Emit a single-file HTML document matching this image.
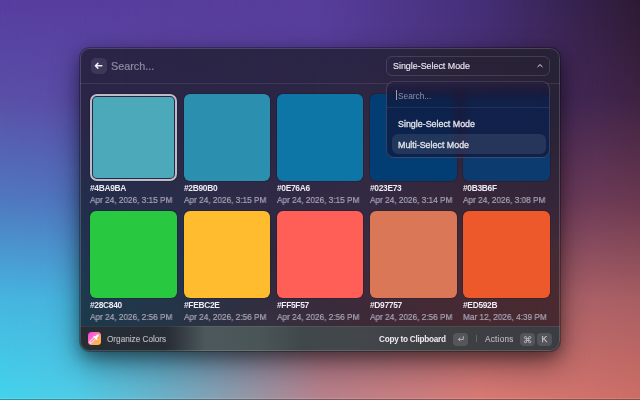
<!DOCTYPE html>
<html><head><meta charset="utf-8">
<style>
*{box-sizing:border-box;margin:0;padding:0}
html,body{width:640px;height:400px;overflow:hidden;background:#563D9F}
body{position:relative;font-family:"Liberation Sans",sans-serif;}
.bgl{position:absolute;left:0;top:0;width:640px;height:400px}
.wl{position:absolute;left:0;top:0;width:480px;height:303px}
.win{position:absolute;left:80px;top:48px;width:480px;height:303px;border-radius:10px;overflow:hidden;
 box-shadow:0 12px 30px rgba(0,0,0,0.45), 0 5px 14px rgba(0,0,0,0.3), 0 0 0 1px rgba(0,0,0,0.28);}
.win div{will-change:transform}
.wborder{position:absolute;inset:0;border-radius:10px;border:1px solid rgba(255,255,255,0.16);pointer-events:none}
.sep{position:absolute;left:0;width:100%;height:1px;background:rgba(255,255,255,0.09)}
.back{position:absolute;left:11.2px;top:10.2px;width:15.5px;height:15.5px;border-radius:5px;background:rgba(255,255,255,0.09)}
.search{position:absolute;left:30.8px;top:12.8px;font-size:10.8px;line-height:11px;color:#8E8AA0;white-space:nowrap;-webkit-text-stroke:0.2px #8E8AA0}
.dd{position:absolute;left:306px;top:7.6px;width:163.6px;height:20.4px;border-radius:6px;border:1px solid rgba(255,255,255,0.13)}
.ddt{position:absolute;left:312.6px;top:14.3px;font-size:8.9px;line-height:9px;color:#E6E4EE;white-space:nowrap;-webkit-text-stroke:0.15px #E6E4EE}
.tile{position:absolute;border-radius:6px;box-shadow:0 0 0 1px rgba(0,0,0,0.14)}
.tile.sel{border:2px solid #BEBCC6;border-radius:7px;padding:1px;}
.tile.sel .in{width:100%;height:100%;border-radius:4px}
.hex{position:absolute;font-size:8.4px;line-height:9px;font-weight:700;color:#ECEAF2;white-space:nowrap;letter-spacing:-0.3px}
.date{position:absolute;font-size:9px;line-height:9px;color:#AAA6B8;white-space:nowrap;-webkit-text-stroke:0.2px #AAA6B8;transform:scaleX(0.915);transform-origin:0 0}
.footer{position:absolute;left:0;top:278px;width:480px;height:25px;background:linear-gradient(to right,#272D35 0px,#272D35 85px,#2F353B 95px,#4C585B 125px,#4A5558 180px,#40474A 224px,#43474B 279px,#3E4044 340px,#3C3D42 480px)}
.ftxt{position:absolute;font-size:8.2px;line-height:9px;color:#BAB6C2;white-space:nowrap;-webkit-text-stroke:0.15px #BAB6C2}
.badge{position:absolute;top:284px;height:13px;width:15px;border-radius:4px;background:rgba(255,255,255,0.12);color:#C8C8CC;font-size:8px;line-height:13px;text-align:center}
.pop{position:absolute;left:306.4px;top:33.4px;width:163.8px;height:77px;border-radius:8px;border:1px solid rgba(255,255,255,0.15);background:linear-gradient(to bottom,rgba(30,28,70,0.42),rgba(22,12,44,0.55) 14px);backdrop-filter:blur(5px);-webkit-backdrop-filter:blur(5px);overflow:hidden}
.ptxt{position:absolute;font-size:8.9px;line-height:9px;color:#E4E4EC;white-space:nowrap;-webkit-text-stroke:0.3px #E4E4EC}
</style></head><body>
<div class="bgl" style="background:linear-gradient(to bottom,#563D9F 0px,#5A50A8 100px,#5078C0 200px,#46B6E0 300px,#43D4EC 400px);"></div>
<div class="bgl" style="background:linear-gradient(to bottom,#573D9E 0px,#5A4CA6 100px,#5074BE 200px,#46B2DC 300px,#4FCCE6 400px);-webkit-mask-image:linear-gradient(to right,transparent 0px,#000 80px);"></div>
<div class="bgl" style="background:linear-gradient(to bottom,#583D9C 0px,#5A45A0 100px,#5A70B8 200px,#4E9EC8 300px,#6BB2C8 400px);-webkit-mask-image:linear-gradient(to right,transparent 80px,#000 160px);"></div>
<div class="bgl" style="background:linear-gradient(to bottom,#583D9C 0px,#56409A 100px,#705A98 200px,#9A6680 300px,#B8828C 400px);-webkit-mask-image:linear-gradient(to right,transparent 160px,#000 320px);"></div>
<div class="bgl" style="background:linear-gradient(to bottom,#452F78 0px,#4A3070 100px,#704068 200px,#B06670 300px,#D87A74 400px);-webkit-mask-image:linear-gradient(to right,transparent 320px,#000 480px);"></div>
<div class="bgl" style="background:linear-gradient(to bottom,#2C1A33 0px,#3E2242 100px,#6A3850 200px,#A85E62 300px,#CC6E66 400px);-webkit-mask-image:linear-gradient(to right,transparent 480px,#000 640px);"></div>
<div class="win">
<div class="wl" style="background:linear-gradient(to bottom,#2B2548 8px,#2B2548 67px,#232E4C 157px,#213450 204px,#1E3A4E 252px,#1C3A4C 274px);"></div>
<div class="wl" style="background:linear-gradient(to bottom,#2A2546 8px,#2C2646 67px,#2A2E4A 157px,#243050 204px,#263448 252px,#273446 274px);-webkit-mask-image:linear-gradient(to right,transparent 5px,#000 100px);"></div>
<div class="wl" style="background:linear-gradient(to bottom,#2B2546 8px,#2C2646 67px,#302A46 157px,#30283F 204px,#342C40 252px,#36303F 274px);-webkit-mask-image:linear-gradient(to right,transparent 100px,#000 193px);"></div>
<div class="wl" style="background:linear-gradient(to bottom,#2A2546 8px,#302842 67px,#342A44 157px,#3C2C3E 204px,#3E2A3A 252px,#3E2A38 274px);-webkit-mask-image:linear-gradient(to right,transparent 193px,#000 286px);"></div>
<div class="wl" style="background:linear-gradient(to bottom,#292338 8px,#2C243E 67px,#38283A 157px,#452C38 204px,#462A34 252px,#462A32 274px);-webkit-mask-image:linear-gradient(to right,transparent 286px,#000 379px);"></div>
<div class="wl" style="background:linear-gradient(to bottom,#282236 8px,#282236 67px,#36263A 157px,#452A34 204px,#4A2A30 252px,#482A30 274px);-webkit-mask-image:linear-gradient(to right,transparent 379px,#000 474px);"></div>
<div class="sep" style="top:35px"></div>
<div class="back"><svg width="16" height="16" viewBox="0 0 16 16" style="position:absolute;left:0;top:0"><path d="M10.8 7.8H4.6M6.9 5.4L4.4 7.8 6.9 10.2" stroke="#F2F0F8" stroke-width="1.5" fill="none" stroke-linecap="round" stroke-linejoin="round"/></svg></div>
<div class="search">Search...</div>
<div class="dd"><svg width="12" height="8" viewBox="0 0 12 8" style="position:absolute;left:147.5px;top:4.6px"><path d="M2.8 4.7L5 2.6 7.2 4.7" stroke="#E8E6EE" stroke-width="1.0" fill="none" stroke-linecap="round" stroke-linejoin="round"/></svg></div>
<div class="ddt">Single-Select Mode</div>
<div class="tile sel" style="left:10px;top:46px;width:87px;height:86.6px"><div class="in" style="background:#4BA9BA"></div></div>
<div class="hex" style="left:10px;top:135.8px">#4BA9BA</div>
<div class="date" style="left:10px;top:147.7px">Apr 24, 2026, 3:15 PM</div>
<div class="tile" style="left:104px;top:46px;width:86px;height:86.6px;background:#2B90B0"></div>
<div class="hex" style="left:104px;top:135.8px">#2B90B0</div>
<div class="date" style="left:104px;top:147.7px">Apr 24, 2026, 3:15 PM</div>
<div class="tile" style="left:197px;top:46px;width:86px;height:86.6px;background:#0E76A6"></div>
<div class="hex" style="left:197px;top:135.8px">#0E76A6</div>
<div class="date" style="left:197px;top:147.7px">Apr 24, 2026, 3:15 PM</div>
<div class="tile" style="left:290px;top:46px;width:87px;height:86.6px;background:#023E73"></div>
<div class="hex" style="left:290px;top:135.8px">#023E73</div>
<div class="date" style="left:290px;top:147.7px">Apr 24, 2026, 3:14 PM</div>
<div class="tile" style="left:383px;top:46px;width:87px;height:86.6px;background:#0B3B6F"></div>
<div class="hex" style="left:383px;top:135.8px">#0B3B6F</div>
<div class="date" style="left:383px;top:147.7px">Apr 24, 2026, 3:08 PM</div>
<div class="tile" style="left:10px;top:163px;width:87px;height:86.6px;background:#28C840"></div>
<div class="hex" style="left:10px;top:252.8px">#28C840</div>
<div class="date" style="left:10px;top:264.7px">Apr 24, 2026, 2:56 PM</div>
<div class="tile" style="left:104px;top:163px;width:86px;height:86.6px;background:#FEBC2E"></div>
<div class="hex" style="left:104px;top:252.8px">#FEBC2E</div>
<div class="date" style="left:104px;top:264.7px">Apr 24, 2026, 2:56 PM</div>
<div class="tile" style="left:197px;top:163px;width:86px;height:86.6px;background:#FF5F57"></div>
<div class="hex" style="left:197px;top:252.8px">#FF5F57</div>
<div class="date" style="left:197px;top:264.7px">Apr 24, 2026, 2:56 PM</div>
<div class="tile" style="left:290px;top:163px;width:87px;height:86.6px;background:#D97757"></div>
<div class="hex" style="left:290px;top:252.8px">#D97757</div>
<div class="date" style="left:290px;top:264.7px">Apr 24, 2026, 2:56 PM</div>
<div class="tile" style="left:383px;top:163px;width:87px;height:86.6px;background:#ED592B"></div>
<div class="hex" style="left:383px;top:252.8px">#ED592B</div>
<div class="date" style="left:383px;top:264.7px">Mar 12, 2026, 4:39 PM</div>
<div class="footer"></div>
<div class="sep" style="top:278px;background:rgba(255,255,255,0.07)"></div>
<div style="position:absolute;left:7.9px;top:283.9px;width:12.8px;height:13px;border-radius:3.5px;background:linear-gradient(135deg,#F040E0 0%,#FF70C0 40%,#FFA860 65%,#FFC030 100%)">
<svg width="13" height="13" viewBox="0 0 13 13" style="position:absolute;left:0;top:0"><path d="M1.8 11.1L1.6 9.7 6.2 5.1 7.8 6.7 3.2 11.3Z" fill="#FF8CC0" stroke="#fff" stroke-width="0.9" stroke-linejoin="round"/><path d="M6.1 4.5L8.9 7.3" stroke="#fff" stroke-width="1.3" stroke-linecap="round"/><path d="M8 5.2L9.7 3.5" stroke="#fff" stroke-width="2.3" stroke-linecap="round"/></svg></div>
<div class="ftxt" style="left:27px;top:287px">Organize Colors</div>
<div class="ftxt" style="left:299.4px;top:287.3px;font-weight:700;color:#EEECF2;letter-spacing:-0.25px;-webkit-text-stroke:0px">Copy to Clipboard</div>
<div class="badge" style="left:373px;top:284.8px"><svg width="15" height="13" viewBox="0 0 15 13" style="position:absolute;left:0;top:0"><path d="M10.3 3.6V6.4H5.4M7 4.9L5.4 6.4 7 7.9" stroke="#B4B2B8" stroke-width="1.0" fill="none" stroke-linecap="round" stroke-linejoin="round"/></svg></div>
<div style="position:absolute;left:396.4px;top:286.7px;width:1px;height:7px;background:rgba(255,255,255,0.2)"></div>
<div class="ftxt" style="left:405.3px;top:287.1px;color:#B8B4BE;-webkit-text-stroke:0.15px #B8B4BE;letter-spacing:0.25px">Actions</div>
<div class="badge" style="left:440.2px;top:284.5px"><svg width="15" height="13" viewBox="0 0 15 13" style="position:absolute;left:0;top:0"><g transform="translate(3.6 2.6)"><path d="M3 3H5V5H3ZM3 3V1.9A1.1 1.1 0 1 0 1.9 3H3M5 3V1.9A1.1 1.1 0 1 1 6.1 3H5M5 5V6.1A1.1 1.1 0 1 0 6.1 5H5M3 5V6.1A1.1 1.1 0 1 1 1.9 5H3" stroke="#BDBBC2" stroke-width="0.95" fill="none"/></g></svg></div>
<div class="badge" style="left:457.3px;top:284.5px;width:14.5px;line-height:12.8px;font-size:8.6px;-webkit-text-stroke:0.25px #C8C8CC">K</div>
<div class="pop">
<div class="sep" style="top:25px;background:rgba(255,255,255,0.08)"></div>
<div style="position:absolute;left:8.8px;top:8.3px;width:1.3px;height:10.3px;background:#9AA0B0"></div>
<div class="ptxt" style="left:10.6px;top:10.2px;color:#8A93A8;font-size:8.3px;-webkit-text-stroke:0">Search...</div>
<div class="ptxt" style="left:11.3px;top:37.9px">Single-Select Mode</div>
<div style="position:absolute;left:4.6px;top:51.5px;width:154px;height:20.4px;border-radius:6px;background:rgba(255,255,255,0.095)"></div>
<div class="ptxt" style="left:11.3px;top:58.8px">Multi-Select Mode</div>
</div>
<div class="wborder"></div>
</div>
<div style="position:absolute;left:0;top:398px;width:640px;height:1px;background:rgba(255,255,255,0.12)"></div>
<div style="position:absolute;left:0;top:399px;width:640px;height:1px;background:rgba(0,0,0,0.32)"></div>
</body></html>
